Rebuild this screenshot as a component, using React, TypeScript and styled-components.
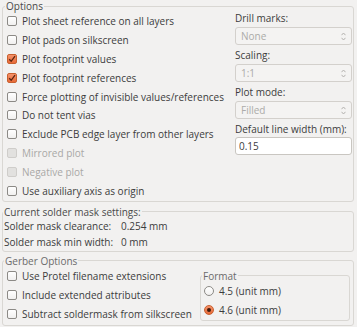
import React from 'react'
import styled, { createGlobalStyle, css } from 'styled-components'

const GlobalStyle = createGlobalStyle`
  html, body {
    margin: 0;
    padding: 0;
    background: #f2f1f0;
  }
  body {
    font-family: "Open Sans", "DejaVu Sans", sans-serif;
    font-size: 10px;
    color: #3c3c3c;
  }
`

const Page = styled.div`
  width: 357px;
  height: 327px;
  box-sizing: border-box;
  padding: 0 3px 0 2px;
  display: flex;
  flex-direction: column;
  overflow: hidden;
`

const Group = styled.fieldset<{ $top?: number; $padLeft?: number }>`
  margin: ${({ $top }) => $top || 0}px 0 0 0;
  padding: 0 1px 1px ${({ $padLeft }) => ($padLeft === undefined ? 4 : $padLeft)}px;
  border: 1px solid #d9d7d3;
  border-radius: 3px;
  min-width: 0;
`

const Legend = styled.legend<{ $shift?: number; $muted?: boolean }>`
  padding: 0 1px;
  margin-left: ${({ $shift }) => $shift || 0}px;
  line-height: 12px;
  color: ${({ $muted }) => ($muted ? '#6b6b6b' : '#4a4a4a')};
`

const Columns = styled.div`
  display: flex;
  align-items: flex-start;
`

const LeftColumn = styled.div`
  flex: 1;
  min-width: 0;
  display: flex;
  flex-direction: column;
`

const RightColumn = styled.div`
  width: 117px;
  flex: none;
  display: flex;
  flex-direction: column;
`

const Row = styled.label<{ $h?: number; $disabled?: boolean }>`
  height: ${({ $h }) => $h || 18.8}px;
  display: flex;
  align-items: center;
  gap: 5px;
  white-space: nowrap;
  color: ${({ $disabled }) => ($disabled ? '#a9a8a6' : '#3c3c3c')};
`

const Box = styled.span<{ $checked?: boolean; $disabled?: boolean }>`
  width: 10px;
  height: 10px;
  flex: none;
  box-sizing: border-box;
  border-radius: 2px;
  border: 1px solid #8c8a86;
  background: linear-gradient(#ffffff, #f1f0ef);
  display: flex;
  align-items: center;
  justify-content: center;
  ${({ $checked }) =>
    $checked &&
    css`
      border-color: #c8602f;
      background: linear-gradient(#f5926a, #e86a38);
    `}
  ${({ $disabled }) =>
    $disabled &&
    css`
      border-color: #cfcdca;
      background: #e2e1df;
    `}
`

const Round = styled.span<{ $checked?: boolean }>`
  width: 10px;
  height: 10px;
  flex: none;
  box-sizing: border-box;
  border-radius: 50%;
  border: 1px solid #8c8a86;
  background: linear-gradient(#ffffff, #f1f0ef);
  display: flex;
  align-items: center;
  justify-content: center;
  ${({ $checked }) =>
    $checked &&
    css`
      border-color: #c8602f;
      background: linear-gradient(#f5926a, #e86a38);
    `}
`

const Dot = styled.span`
  width: 4px;
  height: 4px;
  border-radius: 50%;
  background: #3b1a0c;
`

const FieldLabel = styled.div<{ $gap?: number }>`
  line-height: 13px;
  margin-top: ${({ $gap }) => $gap || 0}px;
  white-space: nowrap;
`

const Combo = styled.div`
  height: 18px;
  margin-top: 2px;
  box-sizing: border-box;
  border: 1px solid #d3d0cc;
  border-radius: 3px;
  background: #f4f3f2;
  color: #acaba9;
  display: flex;
  align-items: center;
  justify-content: space-between;
  padding: 0 5px;
`

const Spinner = styled.svg`
  width: 5px;
  height: 9px;
`

const TextInput = styled.input`
  height: 18px;
  margin: 1px 0 0 0;
  box-sizing: border-box;
  border: 1px solid #c9c6c1;
  border-radius: 3px;
  background: #ffffff;
  color: #3c3c3c;
  font: inherit;
  padding: 0 3px;
  width: 100%;
  outline: none;
`

const InfoRow = styled.div`
  height: 16px;
  display: flex;
  align-items: center;
  white-space: nowrap;
`

const InfoLabel = styled.span`
  width: 117px;
  flex: none;
`

const FormatGroup = styled(Group)`
  width: 150px;
  flex: none;
  box-sizing: border-box;
  margin: 3px 2px 0 0;
  padding: 0 0 0 3px;
`

type CheckProps = { label: string; checked?: boolean; disabled?: boolean; h?: number }

const Check = ({ label, checked, disabled, h }: CheckProps) => (
  <Row $h={h} $disabled={disabled}>
    <Box $checked={checked} $disabled={disabled}>
      {checked && (
        <svg width="8" height="8" viewBox="0 0 8 8">
          <path d="M1.2 4.2 L3.2 6.3 L7 1.2" stroke="#5a2410" strokeWidth="1.3" fill="none" />
        </svg>
      )}
    </Box>
    {label}
  </Row>
)

const Radio = ({ label, checked }: { label: string; checked?: boolean }) => (
  <Row $h={19}>
    <Round $checked={checked}>{checked && <Dot />}</Round>
    {label}
  </Row>
)

const Select = ({ value }: { value: string }) => (
  <Combo>
    {value}
    <Spinner viewBox="0 0 5 9">
      <path d="M0.5 3.2 L2.5 1 L4.5 3.2 M0.5 5.8 L2.5 8 L4.5 5.8" stroke="#b3b1ae" strokeWidth="1" fill="none" />
    </Spinner>
  </Combo>
)

const options: CheckProps[] = [
  { label: 'Plot sheet reference on all layers' },
  { label: 'Plot pads on silkscreen' },
  { label: 'Plot footprint values', checked: true },
  { label: 'Plot footprint references', checked: true },
  { label: 'Force plotting of invisible values/references' },
  { label: 'Do not tent vias' },
  { label: 'Exclude PCB edge layer from other layers' },
  { label: 'Mirrored plot', disabled: true },
  { label: 'Negative plot', disabled: true },
  { label: 'Use auxiliary axis as origin' },
]

const App = () => (
  <Page>
    <GlobalStyle />
    <Group>
      <Legend $shift={-2}>Options</Legend>
      <Columns>
        <LeftColumn>
          {options.map((o) => (
            <Check key={o.label} {...o} />
          ))}
        </LeftColumn>
        <RightColumn>
          <FieldLabel>Drill marks:</FieldLabel>
          <Select value="None" />
          <FieldLabel $gap={4}>Scaling:</FieldLabel>
          <Select value="1:1" />
          <FieldLabel $gap={4}>Plot mode:</FieldLabel>
          <Select value="Filled" />
          <FieldLabel $gap={4}>Default line width (mm):</FieldLabel>
          <TextInput defaultValue="0.15" />
        </RightColumn>
      </Columns>
    </Group>

    <Group $top={4} $padLeft={1}>
      <Legend $shift={-1}>Current solder mask settings:</Legend>
      <InfoRow>
        <InfoLabel>Solder mask clearance:</InfoLabel>
        0.254 mm
      </InfoRow>
      <InfoRow>
        <InfoLabel>Solder mask min width:</InfoLabel>
        0 mm
      </InfoRow>
    </Group>

    <Group $top={3}>
      <Legend $shift={-3} $muted>
        Gerber Options
      </Legend>
      <Columns>
        <LeftColumn>
          <Check label="Use Protel filename extensions" h={19} />
          <Check label="Include extended attributes" h={19} />
          <Check label="Subtract soldermask from silkscreen" h={19} />
        </LeftColumn>
        <FormatGroup>
          <Legend $shift={-2} $muted>
            Format
          </Legend>
          <Radio label="4.5 (unit mm)" />
          <Radio label="4.6 (unit mm)" checked />
        </FormatGroup>
      </Columns>
    </Group>
  </Page>
)

export default App
